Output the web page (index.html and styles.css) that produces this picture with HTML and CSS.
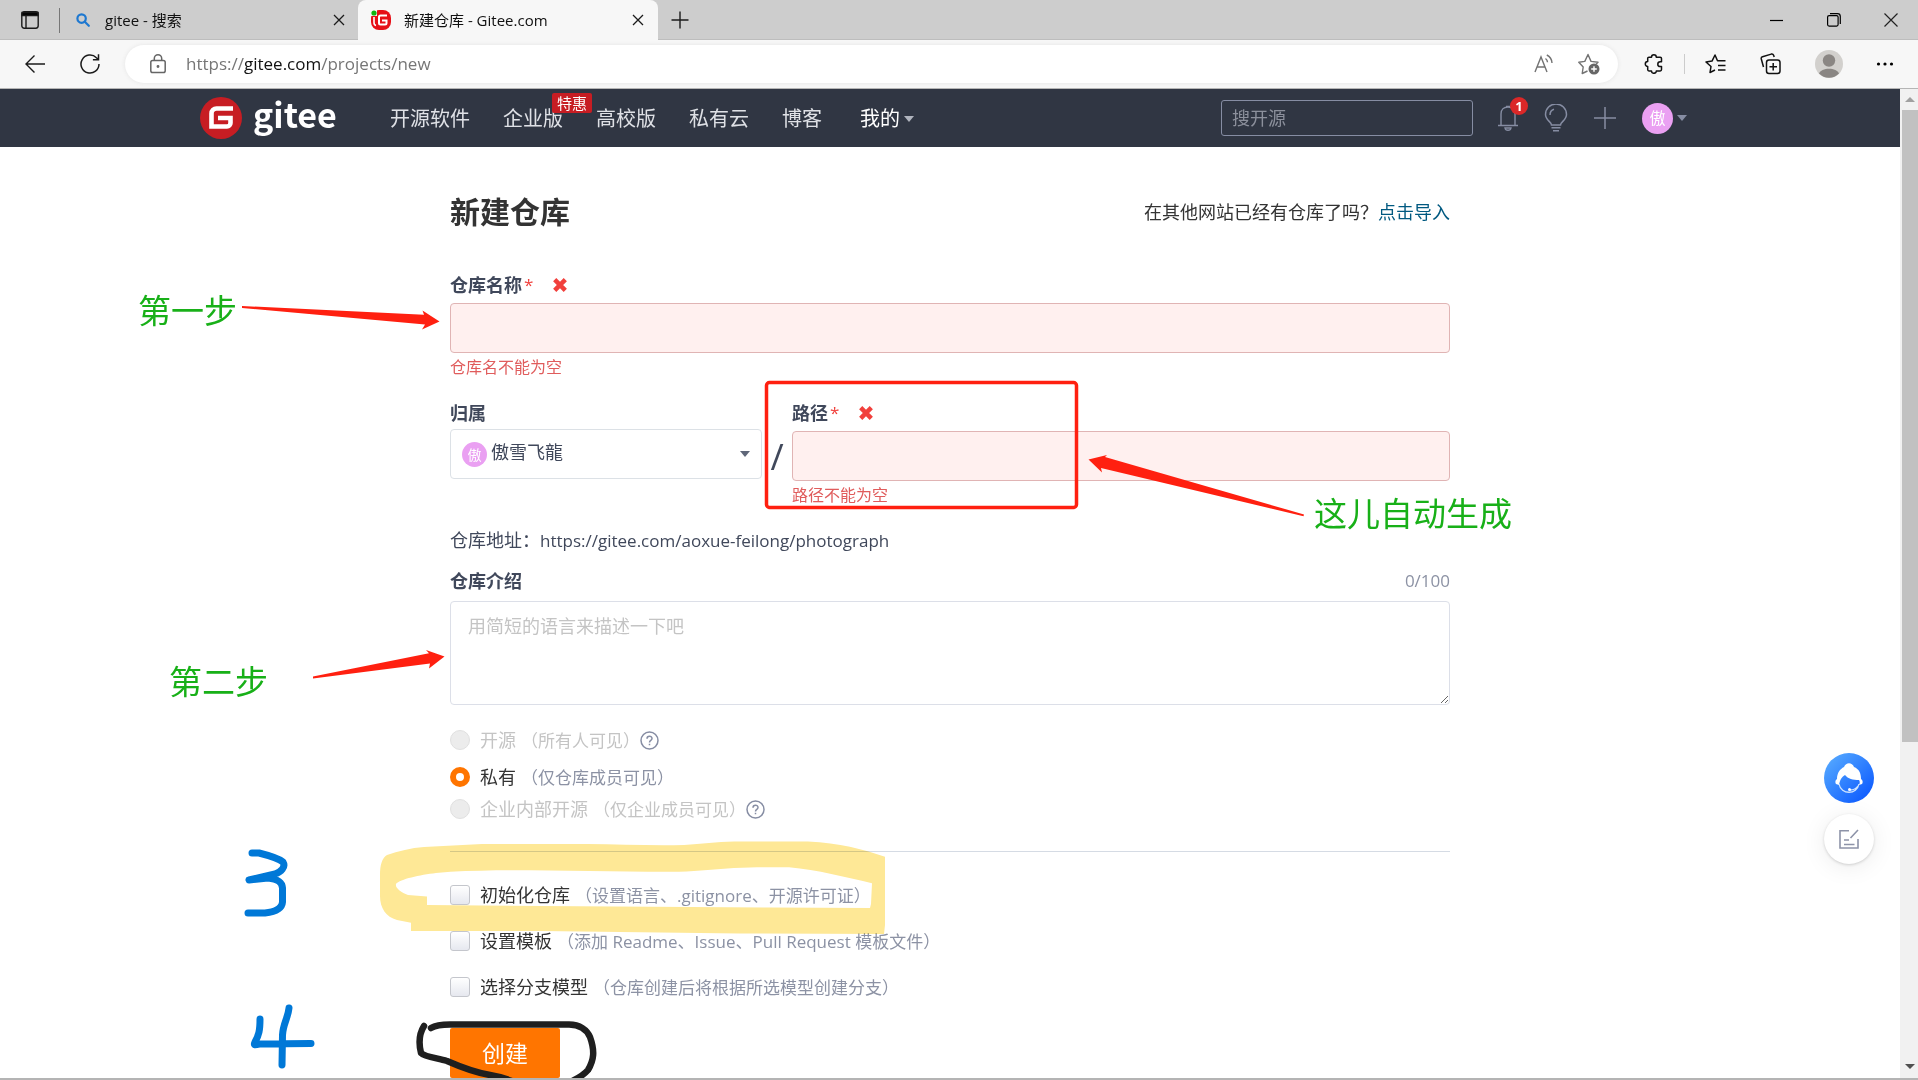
FILE: index.html
```html
<!DOCTYPE html>
<html lang="zh-CN">
<head>
<meta charset="utf-8">
<title>新建仓库 - Gitee.com</title>
<link rel="stylesheet" href="styles.css">
</head>
<body>
<div class="tabstrip">
  <button class="icon-btn tab-actions" aria-label="标签页操作"><svg width="18" height="18" viewBox="0 0 18 18" fill="none" stroke="#1b1b1b" stroke-width="1.4"><rect x=".8" y=".8" width="16.4" height="16.4" rx="2.4"/><path d="M1 1.5h16v3H1z" fill="#000"/><path d="M5 5v12"/></svg></button>
  <span class="tab-divider"></span>
  <div class="tab">
    <svg class="favicon-search" width="14" height="14" viewBox="0 0 14 14" fill="none" stroke="#1e78d0" stroke-width="2.2"><circle cx="5.6" cy="5.6" r="4.2"/><path d="M8.8 8.8l4 4" stroke-linecap="round"/></svg>
    <span class="tab-title">gitee - 搜索</span>
    <button class="icon-btn" aria-label="关闭标签页"><svg width="12" height="12" viewBox="0 0 12 12" stroke="#1b1b1b" stroke-width="1.3"><path d="M1 1l10 10M11 1L1 11"/></svg></button>
  </div>
  <div class="tab tab-active">
    <svg width="20" height="20" viewBox="0 0 20 20"><rect x="0" y="0" width="20" height="20" rx="8" fill="#e60f17"/><path d="M0 0h6v6H0z" fill="#f7f7f7"/><circle cx="3" cy="3" r="2.6" fill="#0fb50f"/><path d="M3 7v5.5c0 1.8.6 2.700 2 3" fill="none" stroke="#fff" stroke-width="1.6"/><path d="M16 5.500H9.500c-1 0-1.500.5-1.500 1.500v6c0 1 .5 1.500 1.500 1.500H14c1 0 1.500-.5 1.500-1.500v-2.500H11" fill="none" stroke="#fff" stroke-width="2"/></svg>
    <span class="tab-title">新建仓库 - Gitee.com</span>
    <button class="icon-btn" aria-label="关闭标签页"><svg width="12" height="12" viewBox="0 0 12 12" stroke="#1b1b1b" stroke-width="1.3"><path d="M1 1l10 10M11 1L1 11"/></svg></button>
  </div>
  <button class="icon-btn new-tab" aria-label="新建标签页"><svg width="18" height="18" viewBox="0 0 18 18" stroke="#1b1b1b" stroke-width="1.4"><path d="M9 .5v17M.5 9h17"/></svg></button>
  <div class="window-controls">
    <button class="icon-btn" aria-label="最小化"><svg width="14" height="14" viewBox="0 0 14 14" stroke="#000" stroke-width="1.2"><path d="M0 7.500h13"/></svg></button>
    <button class="icon-btn" aria-label="还原"><svg width="14" height="14" viewBox="0 0 14 14" fill="none" stroke="#000" stroke-width="1.2"><rect x=".6" y="2.600" width="10.500" height="10.500" rx="1.500"/><path d="M3 .7h7.500c1.800 0 2.800 1 2.800 2.800V11"/></svg></button>
    <button class="icon-btn" aria-label="关闭"><svg width="14" height="14" viewBox="0 0 14 14" stroke="#222" stroke-width="1.200"><path d="M.5.5l13 13M13.500.5l-13 13"/></svg></button>
  </div>
</div>

<div class="toolbar">
  <button class="icon-btn back" aria-label="返回"><svg width="20" height="18" viewBox="0 0 20 18" fill="none" stroke="#1b1b1b" stroke-width="1.4"><path d="M20 9H1M9.500.5L1 9l8.500 8.500"/></svg></button>
  <button class="icon-btn reload" aria-label="刷新"><svg width="20" height="20" viewBox="0 0 20 20" fill="none" stroke="#1b1b1b" stroke-width="1.5"><path d="M19 10a9 9 0 1 1-2.600-6.300L18.300 5.500M18.500.3v5.500h-5.600"/></svg></button>
  <div class="address">
    <svg width="16" height="20" viewBox="0 0 16 20" fill="none" stroke="#666" stroke-width="1.5"><rect x=".8" y="6.500" width="14.400" height="12" rx="1.800"/><path d="M4.300 6.500V4.500a3.700 3.700 0 0 1 7.400 0v2"/><circle cx="8" cy="12.500" r=".7" fill="#666"/></svg>
    <span class="url">https://<b>gitee.com</b>/projects/new</span>
    <button class="icon-btn" aria-label="大声朗读"><svg width="20" height="20" viewBox="0 0 20 20" fill="none" stroke="#737373" stroke-width="1.400"><path d="M1 18L7 3l6 15M3.200 13h7.800M11.500 4.500c1.300.9 2 2.100 2 3.800M12.800 1c3 1.500 5 4 5.200 8"/></svg></button>
    <button class="icon-btn" aria-label="添加到收藏夹"><svg width="22" height="22" viewBox="0 0 22 22" fill="none" stroke="#737373" stroke-width="1.400" stroke-linejoin="round"><path d="M9.500 18l-5.300 2.500 1-6.500L.8 9.300l6-.9L10 1.500l3 6.900 7 .9-2 2"/><circle cx="16" cy="16" r="5.500" fill="#666" stroke="none"/><path d="M16 13.200v5.600M13.200 16h5.600" stroke="#fff"/></svg></button>
  </div>
  <button class="icon-btn" aria-label="扩展"><svg width="20" height="20" viewBox="0 0 20 20" fill="none" stroke="#111" stroke-width="1.500" stroke-linejoin="round"><path d="M7.500 3.200a2.400 2.400 0 0 1 4.800 0h3.900c.8 0 1.300.5 1.300 1.300v3.300h-1.300a2.400 2.400 0 0 0 0 4.800h1.300v3c0 .8-.5 1.300-1.300 1.300h-3.900a2.400 2.400 0 0 1-4.800 0H5c-.8 0-1.300-.5-1.300-1.300v-3.200a2.400 2.400 0 0 1 0-4.800V4.500c0-.8.5-1.300 1.300-1.300z"/></svg></button>
  <span class="tool-divider"></span>
  <button class="icon-btn" aria-label="收藏夹"><svg width="22" height="20" viewBox="0 0 22 20" fill="none" stroke="#111" stroke-width="1.500" stroke-linejoin="round"><path d="M10 16l-5 2.500 1-6L1 8l6-.9L10 1l2.500 5.800h8M13 11.500h7.500M13 16h7.500"/></svg></button>
  <button class="icon-btn" aria-label="集锦"><svg width="22" height="22" viewBox="0 0 22 22" fill="none" stroke="#111" stroke-width="1.500"><rect x="6.500" y="7" width="13.500" height="13.500" rx="2.500"/><path d="M13.200 10v7.500M9.500 13.700H17M3.500 14L1.300 6C1 4.800 1.500 4 2.500 3.700l8.700-2.600c1.200-.3 2 .1 2.400 1.200L14.200 4"/></svg></button>
  <button class="icon-btn" aria-label="个人资料"><svg width="28" height="28" viewBox="0 0 28 28"><circle cx="14" cy="14" r="14" fill="#d2d0cd"/><circle cx="14" cy="10.500" r="6.200" fill="#8a8683"/><path d="M4 23.500c2-6.500 18-6.500 20 0A14 14 0 0 1 4 23.500z" fill="#8a8683"/></svg></button>
  <button class="icon-btn" aria-label="设置及其他"><svg width="18" height="4" viewBox="0 0 18 4"><circle cx="2.500" cy="2" r="1.600"/><circle cx="9" cy="2" r="1.600"/><circle cx="15.500" cy="2" r="1.600"/></svg></button>
</div>

<div class="window-body">
  <div class="page">
    <header class="site-header">
      <div class="header-inner">
        <a class="logo" href="#">
          <svg width="42" height="42" viewBox="0 0 42 42"><circle cx="21" cy="21" r="21" fill="#c71d23"/><path d="M33 11.500H16.500a5 5 0 0 0-5 5V29.500H27a3.500 3.500 0 0 0 3.500-3.500v-5H18" fill="none" stroke="#fff" stroke-width="4.600"/></svg>
          <span>gitee</span>
        </a>
        <nav class="nav">
          <a href="#">开源软件</a>
          <a class="has-tag" href="#">企业版<span class="tag">特惠</span></a>
          <a href="#">高校版</a>
          <a href="#">私有云</a>
          <a href="#">博客</a>
          <a class="mine" href="#">我的<span class="caret"></span></a>
        </nav>
        <input class="search" type="text" placeholder="搜开源" aria-label="搜开源">
        <div class="header-tools">
          <button class="icon-btn bell" aria-label="通知"><svg width="20" height="26" viewBox="0 0 20 26" fill="none" stroke="#868da3" stroke-width="1.400"><path d="M0 20.500h20M3 20V9c0-4.500 3-7 7-7s7 2.500 7 7v11M8 1.500h4M7 23c.5 3 5.500 3 6 0z"/></svg><span class="badge">1</span></button>
          <button class="icon-btn" aria-label="动态"><svg width="24" height="28" viewBox="0 0 24 28" fill="none" stroke="#868da3" stroke-width="1.500"><path d="M7.500 21c0-3-6-5-6-10.500a10.500 10.500 0 0 1 21 0C22.500 16 16.500 18 16.500 21zM7.500 23.800h9M9 26.700h6M6 11c0-3 1.500-5 4-5.700"/></svg></button>
          <button class="icon-btn" aria-label="新建"><svg width="22" height="22" viewBox="0 0 22 22" stroke="#868da3" stroke-width="1.500"><path d="M11 0v22M0 11h22"/></svg></button>
          <button class="icon-btn user" aria-label="用户菜单"><span class="avatar">傲</span><span class="caret"></span></button>
        </div>
      </div>
    </header>

    <main class="content">
      <div class="title-row">
        <h1>新建仓库</h1>
        <p>在其他网站已经有仓库了吗？<a href="#">点击导入</a></p>
      </div>
      <form class="form">
        <div class="field">
          <div class="label-row"><label for="name">仓库名称</label><span class="star">*</span><svg class="cross" width="14" height="14" viewBox="0 0 14 14" stroke="#f1403c" stroke-width="4.500"><path d="M1.700 1.700l10.600 10.600M12.300 1.700L1.700 12.300"/></svg></div>
          <input class="text invalid" id="name" type="text">
          <p class="error">仓库名不能为空</p>
        </div>
        <div class="path-row">
          <div class="owner">
            <label for="owner">归属</label>
            <div class="select-wrap">
              <span class="avatar small">傲</span>
              <select id="owner"><option>傲雪飞龍</option></select>
              <span class="caret dark"></span>
            </div>
          </div>
          <span class="slash">/</span>
          <div class="path">
            <div class="label-row"><label for="path">路径</label><span class="star">*</span><svg class="cross" width="14" height="14" viewBox="0 0 14 14" stroke="#f1403c" stroke-width="4.500"><path d="M1.700 1.700l10.600 10.600M12.300 1.700L1.700 12.300"/></svg></div>
            <input class="text invalid" id="path" type="text">
            <p class="error">路径不能为空</p>
          </div>
        </div>
        <p class="repo-url">仓库地址：<span>https://gitee.com/aoxue-feilong/photograph</span></p>
        <div class="desc-row"><label for="desc">仓库介绍</label><span>0/100</span></div>
        <textarea id="desc" placeholder="用简短的语言来描述一下吧"></textarea>

        <div class="radios">
          <div class="choice disabled"><input type="radio" name="vis" id="pub" disabled><label for="pub">开源<span class="hint">（所有人可见）</span></label><svg width="19" height="19" viewBox="0 0 19 19" fill="none" stroke="#868da3" stroke-width="1.500"><circle cx="9.500" cy="9.500" r="8.500"/><path d="M7 7.700c0-3.300 5-3.300 5-.3 0 1.900-2.500 2-2.500 4M9.500 12.800v1.500"/></svg></div>
          <div class="choice selected"><input type="radio" name="vis" id="pri" checked><label for="pri">私有<span class="hint">（仅仓库成员可见）</span></label></div>
          <div class="choice disabled"><input type="radio" name="vis" id="ent" disabled><label for="ent">企业内部开源<span class="hint">（仅企业成员可见）</span></label><svg width="19" height="19" viewBox="0 0 19 19" fill="none" stroke="#868da3" stroke-width="1.500"><circle cx="9.500" cy="9.500" r="8.500"/><path d="M7 7.700c0-3.300 5-3.300 5-.3 0 1.900-2.500 2-2.500 4M9.500 12.800v1.500"/></svg></div>
        </div>
        <hr>
        <div class="checks">
          <div class="choice"><input type="checkbox" id="init"><label for="init">初始化仓库<span class="hint">（设置语言、.gitignore、开源许可证）</span></label></div>
          <div class="choice"><input type="checkbox" id="tpl"><label for="tpl">设置模板<span class="hint">（添加 Readme、Issue、Pull Request 模板文件）</span></label></div>
          <div class="choice"><input type="checkbox" id="branch"><label for="branch">选择分支模型<span class="hint">（仓库创建后将根据所选模型创建分支）</span></label></div>
        </div>
        <button class="submit" type="button">创建</button>
      </form>

      <!-- Hand-made notes that lie over the form -->
      <svg class="marker" viewBox="120 147 1400 933" width="1400" height="933" aria-hidden="true">
        <path fill="#fee896" fill-rule="evenodd" d="M411 931V922.700L397 920C386 917 380 908 380 896V875C380 865 382 858 387 855C398 851 411 848 424 847L482 844H587C620 844 650 846 684 845C702 844 716 842 734 841.500H808C840 843 862 849 885 856.700V925L884 934L739 933.500L541 931ZM396 884C400 879 420 875 436 873C455 871 475 871 496 870.300C560 870 620 872 679 871.700C700 871 716 869 734 868C755 867 772 867 789 867.300C818 870 845 877 872 883.300L871 904L870 908L771 907.500L541 906L427 905V896.500L408 895C401 892 395 888 396 884Z"/>
      </svg>
      <svg class="ink" viewBox="120 147 1400 933" width="1400" height="933" aria-hidden="true">
        <g fill="#ff2010">
          <path d="M242 306L424 314.700 422.500 310.500 439.500 321.500 422 329.500 425 324.500 242 308z"/>
          <path d="M313 676.500L429 653.300 426 650 444.500 656.500 429 668.500 430 663.500 313 678.500z"/>
          <path d="M1304 514.500L1105 457 1107 455 1088.500 459.500 1102 472.500 1101 468 1303.500 516.300z"/>
        </g>
        <rect x="766.500" y="382.500" width="310" height="125" rx="3" fill="none" stroke="#ff2010" stroke-width="3.500"/>
        <g fill="none" stroke="#0078d7" stroke-width="7" stroke-linecap="round" stroke-linejoin="round">
          <path d="M252 853L259 853C267 855 278 858 283 862C286 867 281 872 275 874L249 880L268 878C278 879 282 882 282.500 888V902C282 909 274 912 265 913L248 913"/>
          <path d="M260 1019C260 1030 259 1035 255 1042C253 1046 256 1045 260 1044L311 1043.500M289 1008C288 1018 283 1024 282.500 1035L282 1065"/>
        </g>
        <g fill="none" stroke="#1f1f1f" stroke-width="6.500" stroke-linecap="round" stroke-linejoin="round">
          <path d="M431 1028C436 1025 443 1024.500 450 1024.500L569 1024.500C580 1024.500 587 1030 590 1037C595 1051 594 1060 588 1070C583 1076 575 1080 566 1084"/>
          <path d="M424 1026C419 1034 419 1045 421 1053C425 1057 437 1058 447 1061C463 1068 478 1073 490 1075C502 1077 510 1080 516 1083"/>
        </g>
      </svg>
      <span class="note note-one">第一步</span>
      <span class="note note-two">第二步</span>
      <span class="note note-auto">这儿自动生成</span>
    </main>

    <div class="float-tools">
      <button class="icon-btn service" aria-label="客服"><svg width="50" height="50" viewBox="0 0 50 50"><defs><linearGradient id="g" x1="0" y1="0" x2="1" y2="1"><stop offset="0" stop-color="#5cb0ff"/><stop offset=".9" stop-color="#0d5bff"/></linearGradient></defs><circle cx="25" cy="25" r="25" fill="url(#g)"/><path d="M12 31c-1-1-1-4 1-5 0-6 3-10 7-12 2-5 8-5 10 0 5 2 7 6 7 12 2 1 2 4 1 5l-3 1c1-2 1-4 0-5-6 0-11-1-14-5-3 2-5 4-6 10z" fill="#fff"/><path d="M15 31c2 11 18 11 20 0M34 33c-2 3-5 4-8 4" fill="none" stroke="#cfe4ff" stroke-width="1.300"/><circle cx="25.500" cy="36.500" r="1.500" fill="#fff"/></svg></button>
      <button class="icon-btn feedback" aria-label="反馈"><svg width="20" height="20" viewBox="0 0 20 20" fill="none" stroke="#8d93a8" stroke-width="1.600"><path d="M10 1.800H1V19h18v-9M19 1l-7.500 8M5 11h5M5 15.500h10.500"/></svg></button>
    </div>
  </div>
  <div class="scrollbar"><span class="arrow up"></span><span class="thumb"></span><span class="arrow down"></span></div>
</div>
</body>
</html>
```
FILE: styles.css
```css
* { box-sizing: border-box; }
html, body { height: 100%; }
body {
  margin: 0;
  display: flex;
  flex-direction: column;
  overflow: hidden;
  border-bottom: 2px solid #b4b4b4;
  background: #fff;
  color: #40485b;
  font-family: "Open Sans", "Noto Sans CJK SC", sans-serif;
  font-size: 18px;
  line-height: 24px;
}
h1, p { margin: 0; }
a { text-decoration: none; }
input, textarea, select, button { font: inherit; color: inherit; }
svg { display: block; flex: none; }
.icon-btn {
  flex: none;
  display: flex;
  align-items: center;
  padding: 0;
  border: 0;
  background: none;
}

/* Browser tabs */
.tabstrip {
  flex: none;
  display: flex;
  align-items: center;
  height: 40px;
  padding-left: 21px;
  background: #cdcdcd;
  color: #111;
  font-size: 15px;
  box-shadow: inset 0 -1px #bdbdbd;
}
.tab-divider { width: 1px; height: 25px; margin-left: 20px; background: #777; }
.tab {
  display: flex;
  align-items: center;
  width: 298px;
  height: 40px;
  padding: 0 13px 0 16px;
  gap: 15px;
}
.tab-title { flex: 1; white-space: nowrap; }
.tab-active {
  width: 300px;
  padding: 0 14px 0 13px;
  gap: 13px;
  border-radius: 8px 8px 0 0;
  background: #f7f7f7;
}
.new-tab { margin-left: 13px; }
.window-controls { display: flex; gap: 43px; margin-left: auto; padding-right: 20px; }

/* Address bar */
.toolbar {
  flex: none;
  display: flex;
  align-items: center;
  gap: 33px;
  height: 49px;
  padding: 0 24px 0 25px;
  border-bottom: 1px solid #b5b5b5;
  background: #f7f7f7;
}
.reload { margin-left: 2px; }
.address {
  flex: 1;
  display: flex;
  align-items: center;
  gap: 24px;
  height: 38px;
  margin: 0 -7px 0 -8px;
  padding: 0 18px 0 25px;
  border-radius: 19px;
  background: #fff;
  box-shadow: 0 0 4px #e4e4e4;
}
.url { flex: 1; margin-left: -4px; color: #767676; font-size: 17px; }
.url b { color: #111; font-weight: 400; }
.tool-divider { width: 1px; height: 20px; margin: 0 -13px; background: #ccc; }

.window-body { flex: 1; min-height: 0; display: flex; }
.page { position: relative; flex: 1; min-width: 0; overflow: hidden; }

/* Site header */
.site-header { background: #303643; }
.header-inner {
  display: flex;
  align-items: center;
  max-width: 1500px;
  height: 58px;
  margin: 0 auto;
}
.logo { display: flex; gap: 11px; align-items: center; width: 190px; color: #fff; }
.logo span {
  padding-bottom: 8px;
  font-family: "Noto Sans CJK SC", sans-serif;
  font-size: 34px;
  font-weight: 700;
  line-height: 50px;
}
.nav { display: flex; gap: 33px; flex: 1; padding-top: 2px; font-size: 20px; white-space: nowrap; }
.nav a { color: #dfe1e6; }
.nav .mine { display: flex; align-items: center; gap: 4px; margin-left: 5px; color: #fff; }
.has-tag { position: relative; }
.tag {
  position: absolute;
  left: 49px;
  top: -14px;
  width: 40px;
  border-radius: 2px;
  background: #c71d23;
  color: #fff;
  font-size: 15px;
  line-height: 20px;
  text-align: center;
}
.caret { border: 5px solid transparent; border-top: 6px solid #b0b4be; border-bottom: 0; }
.search {
  width: 252px;
  height: 36px;
  padding: 0 10px;
  border: 1px solid #868da3;
  border-radius: 3px;
  background: none;
}
.search::placeholder { color: #8c909c; opacity: 1; }
.header-tools { display: flex; align-items: center; gap: 26px; width: 227px; padding-left: 25px; }
.bell { position: relative; }
.badge {
  position: absolute;
  right: -10px;
  top: -8px;
  width: 18px;
  height: 18px;
  border-radius: 9px;
  background: #db2828;
  color: #fff;
  font-size: 13px;
  font-weight: 700;
  line-height: 18px;
  text-align: center;
}
.user { gap: 4px; }
.user .caret { border-top-color: #868da3; }
.avatar {
  width: 31px;
  height: 31px;
  border-radius: 50%;
  background: #eaa0f2;
  color: #fff;
  font-size: 16px;
  line-height: 31px;
  text-align: center;
}

/* New repository form */
.content { position: relative; max-width: 1000px; margin: 0 auto; padding-top: 45px; }
.title-row { display: flex; justify-content: space-between; align-items: center; color: #333; }
.title-row h1 { font-size: 30px; line-height: 40px; }
.title-row a { color: #005980; }
.form { display: flex; flex-direction: column; padding-top: 41px; }
.form label { font-weight: 700; }
.label-row { display: flex; align-items: center; margin-bottom: 6px; }
.star { margin-left: 2px; color: #f1403c; font-size: 17px; }
.cross { margin-left: 20px; }
.text {
  display: block;
  width: 100%;
  height: 50px;
  padding: 0 16px;
  border: 1px solid #dce1e6;
  border-radius: 4px;
}
.invalid { border-color: #e0b4b4; background: #fff0ef; }
.error { margin-top: 4px; color: #e05c5c; font-size: 16px; line-height: 20px; }
.path-row { display: flex; margin-top: 24px; }
.owner { width: 312px; }
.owner label { display: block; margin-bottom: 4px; }
.select-wrap {
  display: flex;
  align-items: center;
  height: 50px;
  padding: 0 11px;
  border: 1px solid #dce1e6;
  border-radius: 4px;
}
.select-wrap select {
  flex: 1;
  height: 48px;
  padding: 0 0 4px 4px;
  border: 0;
  background: none;
  appearance: none;
}
.small { width: 25px; height: 25px; font-size: 14px; line-height: 25px; }
.dark { border-top-color: #5f6779; }
.slash { width: 30px; padding-top: 36px; font-size: 36px; line-height: 40px; text-align: center; }
.path { flex: 1; }
.repo-url { height: 24px; margin-top: 23px; }
.repo-url span { font-size: 17px; line-height: 20px; }
.desc-row { display: flex; justify-content: space-between; margin-top: 17px; }
.desc-row span { color: #8c92a4; font-size: 17px; }
textarea {
  height: 104px;
  margin-top: 8px;
  padding: 12px 17px;
  border: 1px solid #dcdfe8;
  border-radius: 4px;
}
textarea::placeholder { color: #c4c4c4; opacity: 1; }
.radios { display: flex; flex-direction: column; gap: 8px; padding-top: 23px; }
.radios .selected { margin-top: 5px; }
.choice { display: flex; align-items: center; height: 24px; color: #333; }
.choice label { margin-left: 10px; font-weight: 400; }
.choice input { appearance: none; flex: none; width: 20px; height: 20px; margin: 0; }
.choice input[type="radio"] { border: 1px solid #e0e0e0; border-radius: 50%; background: #ececec; }
.choice input[type="radio"]:checked { border: 6px solid #ff7500; background: #fff; }
.choice input[type="checkbox"] {
  border: 1px solid #c4c6cc;
  border-radius: 3px;
  background: linear-gradient(#fff, #e6e8ef);
}
.hint { margin-left: 5px; color: #8c92a4; font-size: 17px; line-height: 20px; }
.disabled, .disabled .hint { color: #c4c4c4; }
hr { width: 100%; height: 1px; margin: 30px 0 31px; border: 0; background: #d5dbe4; }
.checks { display: flex; flex-direction: column; gap: 22px; }
.submit {
  width: 110px;
  height: 50px;
  margin-top: 29px;
  padding: 0;
  border: 0;
  border-radius: 2px;
  background: #ff7500;
  color: #fff;
  font-size: 23px;
}

/* Notes over the form */
.marker, .ink { position: absolute; left: -330px; top: 0; pointer-events: none; }
.marker { mix-blend-mode: multiply; }
.note { position: absolute; color: #18b018; font-size: 33px; line-height: 40px; white-space: nowrap; }
.note-one { left: -312px; top: 144px; }
.note-two { left: -281px; top: 515px; }
.note-auto { left: 864px; top: 347px; }

.float-tools { position: absolute; right: 26px; top: 664px; display: grid; gap: 11px; }
.feedback {
  justify-content: center;
  width: 50px;
  height: 50px;
  border-radius: 50%;
  background: #fff;
  box-shadow: 0 1px 3px rgba(0, 0, 0, .16), 0 3px 24px rgba(0, 0, 0, .08);
}

/* Scrollbar */
.scrollbar {
  flex: none;
  display: flex;
  flex-direction: column;
  align-items: center;
  width: 18px;
  padding: 8px 0 9px 2px;
  background: #f1f1f1;
}
.arrow { border: 5px solid transparent; }
.up { border-top: 0; border-bottom-color: #a0a0a0; }
.thumb { width: 100%; height: 65%; margin-top: 8px; background: #c1c1c1; }
.down { margin-top: auto; border-bottom: 0; border-top-color: #505050; }
```
